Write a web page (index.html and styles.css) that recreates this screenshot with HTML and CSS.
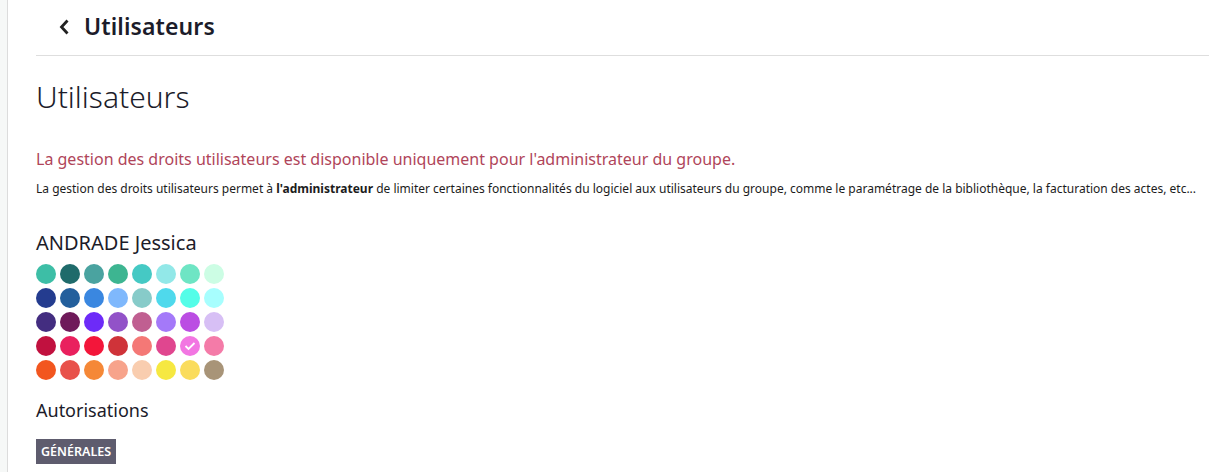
FILE: index.html
```html
<!DOCTYPE html>
<html lang="fr">
<head>
<meta charset="utf-8">
<link rel="stylesheet" href="styles.css">
</head>
<body>
<div class="app">
  <aside class="rail"></aside>
  <main class="content">
    <header class="topbar">
      <svg class="back" width="12" height="18" viewBox="0 0 12 18"><path d="M9.5 2.5 L3.5 9 L9.5 15.5" fill="none" stroke="#222" stroke-width="2.8"/></svg>
      <span class="topbar-title">Utilisateurs</span>
    </header>
    <section class="page">
      <h1 class="title">Utilisateurs</h1>
      <p class="warning">La gestion des droits utilisateurs est disponible uniquement pour l'administrateur du groupe.</p>
      <p class="info">La gestion des droits utilisateurs permet à <b>l'administrateur</b> de limiter certaines fonctionnalités du logiciel aux utilisateurs du groupe, comme le paramétrage de la bibliothèque, la facturation des actes, etc...</p>
      <h2 class="user">ANDRADE Jessica</h2>
      <div class="palette">
        <span class="dot c1"></span><span class="dot c2"></span><span class="dot c3"></span><span class="dot c4"></span><span class="dot c5"></span><span class="dot c6"></span><span class="dot c7"></span><span class="dot c8"></span>
        <span class="dot c9"></span><span class="dot c10"></span><span class="dot c11"></span><span class="dot c12"></span><span class="dot c13"></span><span class="dot c14"></span><span class="dot c15"></span><span class="dot c16"></span>
        <span class="dot c17"></span><span class="dot c18"></span><span class="dot c19"></span><span class="dot c20"></span><span class="dot c21"></span><span class="dot c22"></span><span class="dot c23"></span><span class="dot c24"></span>
        <span class="dot c25"></span><span class="dot c26"></span><span class="dot c27"></span><span class="dot c28"></span><span class="dot c29"></span><span class="dot c30"></span><span class="dot c31 selected"><svg width="12" height="10" viewBox="0 0 12 10"><path d="M1.5 5 L4.5 8 L10.5 2" fill="none" stroke="#fff" stroke-width="1.8"/></svg></span><span class="dot c32"></span>
        <span class="dot c33"></span><span class="dot c34"></span><span class="dot c35"></span><span class="dot c36"></span><span class="dot c37"></span><span class="dot c38"></span><span class="dot c39"></span><span class="dot c40"></span>
      </div>
      <h3 class="section">Autorisations</h3>
      <div class="tabs"><span class="tab">Générales</span></div>
    </section>
  </main>
</div>
</body>
</html>
```
FILE: styles.css
```css
* { box-sizing: border-box; }
html, body { margin: 0; padding: 0; background: #fff; }
body { font-family: "Noto Sans", "Open Sans", sans-serif; color: #222; }
.app { display: flex; min-height: 472px; }
.rail { width: 8px; flex: none; background: #f6f8f7; border-right: 1px solid #dcdcdc; }
.content { flex: 1; padding-left: 28px; min-width: 0; }
.topbar { height: 56px; border-bottom: 1px solid #dedede; display: flex; align-items: center; padding-left: 22px; gap: 14px; }
.back { flex: none; margin-top: -2px; }
.topbar-title { font-size: 23px; font-weight: 600; color: #1c1c2a; letter-spacing: 0.1px; margin-top: -3px; }
.page { padding-top: 21px; }
.title { font-size: 30px; font-weight: 300; margin: 0; line-height: 40px; color: #1c1c2a; }
.warning { margin: 31px 0 0; font-size: 16px; line-height: 22px; color: #b0455a; }
.info { margin: 10px 0 0; font-size: 12px; line-height: 18px; color: #1c1c1c; white-space: nowrap; }
.info b { font-weight: 700; }
.user { margin: 32px 0 0; font-size: 20px; font-weight: 400; line-height: 26px; color: #1c1c2a; }
.palette { margin-top: 8px; display: grid; grid-template-columns: repeat(8, 20px); gap: 4px; }
.dot { width: 20px; height: 20px; border-radius: 50%; display: flex; align-items: center; justify-content: center; }
.c1{background:#3dbea6}.c2{background:#1f6b6b}.c3{background:#4aa3a0}.c4{background:#3db591}.c5{background:#45c9c4}.c6{background:#92e8e8}.c7{background:#6ee5c4}.c8{background:#ccfde4}
.c9{background:#243c8f}.c10{background:#235f9c}.c11{background:#3a87e0}.c12{background:#7fb8fc}.c13{background:#87cbc9}.c14{background:#4fd9ec}.c15{background:#54fde8}.c16{background:#a7fefe}
.c17{background:#432d80}.c18{background:#6f1a5a}.c19{background:#6d2bf8}.c20{background:#9252c8}.c21{background:#c05f91}.c22{background:#a479f9}.c23{background:#bb4de3}.c24{background:#d7bff5}
.c25{background:#c1113f}.c26{background:#e9205e}.c27{background:#f3163a}.c28{background:#cf3339}.c29{background:#f47876}.c30{background:#e0468f}.c31{background:#f276e2}.c32{background:#f47ba8}
.c33{background:#f2561f}.c34{background:#e8514a}.c35{background:#f58837}.c36{background:#f7a38b}.c37{background:#f9cdaf}.c38{background:#f6e841}.c39{background:#fadc5c}.c40{background:#a89478}
.section { margin: 18px 0 0; font-size: 18px; font-weight: 400; line-height: 24px; color: #1c1c2a; }
.tabs { margin-top: 17px; display: flex; }
.tab { background: #5e5c6e; color: #fff; font-size: 12.5px; font-weight: 600; text-transform: uppercase; height: 25px; line-height: 25px; padding: 0 5px; }
```
